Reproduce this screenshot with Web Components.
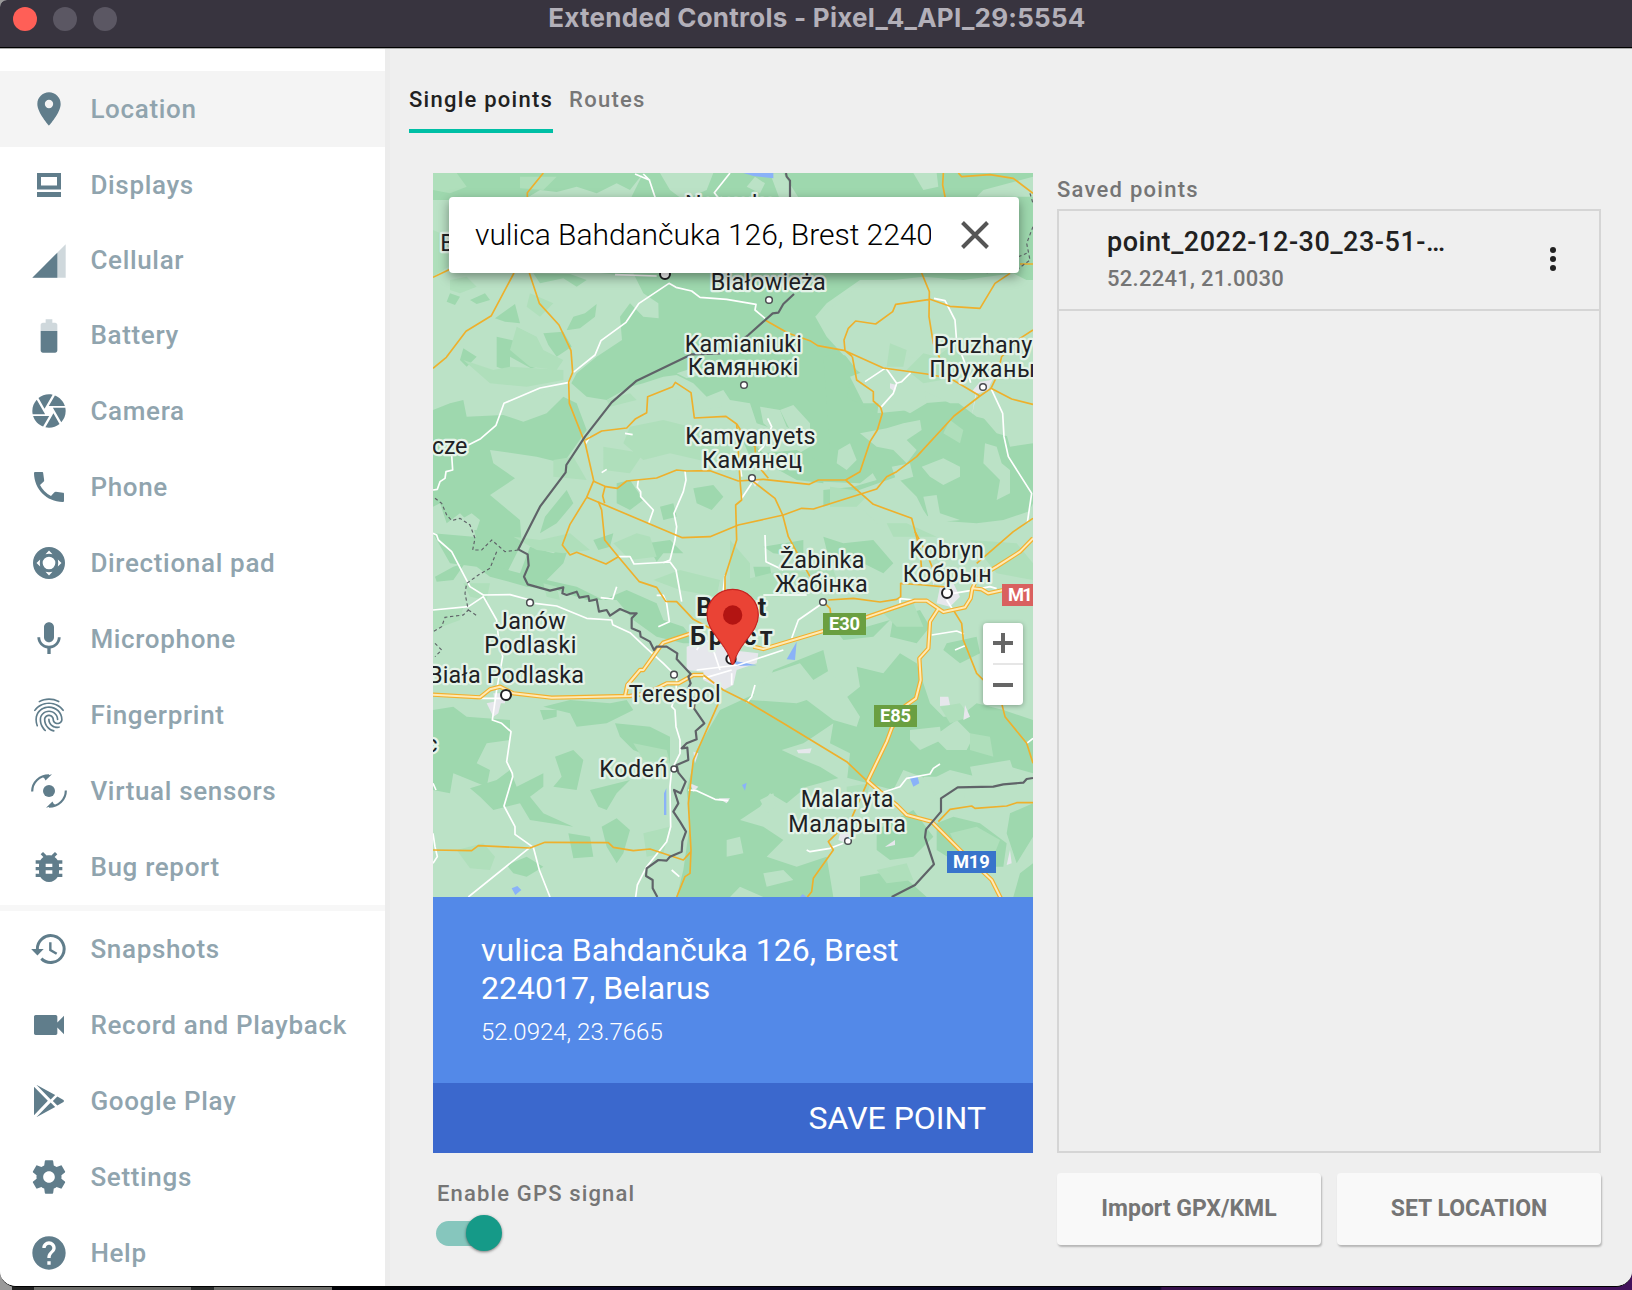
<!DOCTYPE html>
<html lang="en">
<head>
<meta charset="utf-8">
<title>Extended Controls</title>
<style>
html,body{margin:0;padding:0;width:1632px;height:1290px;overflow:hidden;background:#0a0816;font-family:Roboto,"Liberation Sans",sans-serif}
</style>
</head>
<body>
<ec-window>
  <ec-titlebar slot="title">Extended Controls - Pixel_4_API_29:5554</ec-titlebar>
  <ec-sidebar slot="side">
    <ec-nav-item icon="location" active>Location</ec-nav-item>
    <ec-nav-item icon="displays">Displays</ec-nav-item>
    <ec-nav-item icon="cellular" compact>Cellular</ec-nav-item>
    <ec-nav-item icon="battery" compact>Battery</ec-nav-item>
    <ec-nav-item icon="camera">Camera</ec-nav-item>
    <ec-nav-item icon="phone">Phone</ec-nav-item>
    <ec-nav-item icon="dpad">Directional pad</ec-nav-item>
    <ec-nav-item icon="mic">Microphone</ec-nav-item>
    <ec-nav-item icon="finger">Fingerprint</ec-nav-item>
    <ec-nav-item icon="sensors">Virtual sensors</ec-nav-item>
    <ec-nav-item icon="bug">Bug report</ec-nav-item>
    <ec-nav-item slot="lower" icon="history">Snapshots</ec-nav-item>
    <ec-nav-item slot="lower" icon="video">Record and Playback</ec-nav-item>
    <ec-nav-item slot="lower" icon="play">Google Play</ec-nav-item>
    <ec-nav-item slot="lower" icon="settings">Settings</ec-nav-item>
    <ec-nav-item slot="lower" icon="help">Help</ec-nav-item>
  </ec-sidebar>
  <ec-location-page></ec-location-page>
</ec-window>

<template id="map-art">
<svg viewBox="9 9 1800 2172" width="600" height="724" preserveAspectRatio="none">
<rect x="9" y="9" width="1800" height="2172" fill="#bbe2c6"/>
<!-- forests -->
<g fill="#9ed8ae">
<path d="M9 9H640L600 60 560 40 500 70 440 50 380 66 330 60 280 90H9V40L60 45 40 9zM9 80L80 70 130 40 200 55 240 90H9z"/>
<path d="M640 9H1809V330H1290L1190 400 1156 440 1200 480 1245 555 1280 600 1330 640 1345 700 1335 820 1340 900 1290 940 1180 935 1130 910 1090 860 1140 830 1140 760 1090 705 1050 720 1075 770 1110 830 1040 780 980 760 960 700 900 690 880 660 830 680 790 640 740 615 700 620 640 640 600 650 530 690 470 680 424 640 440 610 500 560 576 510 570 440 600 400 640 440 686 445 685 400 640 370 610 310 560 314 430 300V90H600z"/>
<path d="M920 770L1000 850 1100 840 1180 880 1180 940 1100 930 1010 880 960 860z"/>
<path d="M9 720L60 700 100 690 110 740 220 735 280 755 350 730 400 680 440 700 470 780 400 880 320 860 180 840 190 880 255 925 180 975 270 1050 275 1120 220 1230 160 1190 130 1070 90 1030 50 1060 30 1000 9 1010z"/>
<path d="M1180 560L1240 550 1270 600 1250 680 1340 730 1440 720 1480 700 1600 690 1640 720 1700 790 1809 820V1000L1780 1060 1700 1090 1560 1060 1510 1030 1470 1050 1380 990 1320 1020 1250 990 1180 1010 1180 960 1270 950 1340 930 1300 860 1200 840z"/>
<path d="M410 480L430 440 465 430 500 402 495 440 450 475 415 480zM195 445L255 402 270 460 225 455zM340 490L400 485 425 530 380 560 355 525zM200 500L285 520 330 560 320 590 250 610 200 590zM100 535L140 560 110 590 90 570zM120 390L165 370 180 390 140 402zM60 370L90 380 75 405 50 395zM310 310L420 312 470 330 440 350 400 325 330 340z"/>
<path d="M790 955L850 945 880 980 845 1020 800 1000zM345 1040L410 960 430 1000 380 1060 330 1090zM560 940L600 930 640 990 600 1020 560 1000zM690 1010L730 1000 740 1040 700 1050z"/>
<path d="M9 1090L130 1100 190 1120 200 1190 270 1210 300 1130 370 1150 420 1120 400 1180 350 1230 440 1250 520 1290 590 1260 680 1300 700 1350 760 1370 800 1420 760 1420 680 1400 610 1350 560 1290 470 1290 380 1260 290 1250 180 1220 140 1190 60 1180z"/>
<path d="M15 1220L70 1190 105 1180 70 1230 20 1235zM490 1110L550 1090 540 1130 505 1140zM650 1120L720 1110 760 1150 700 1150 680 1175z"/>
<path d="M9 1620L70 1610 110 1640 240 1650 240 1710 170 1720 140 1780 180 1800 170 1850 70 1810 60 1870 9 1860zM340 1610L420 1590 540 1600 590 1590 610 1620 530 1660 440 1670 420 1630zM330 1620L380 1620 380 1640 340 1650z"/>
<path d="M375 1760L430 1740 460 1770 440 1860 370 1850 395 1820zM555 1660L660 1670 720 1700 720 1780 660 1760 610 1740 570 1700zM120 1855L200 1830 240 1800 260 1850 340 1810 340 1850 300 1880 340 1930 430 1970 300 1950 270 1900 190 1920 150 1880zM480 1860L600 1830 560 1870 530 1920 505 1910zM415 1990L480 2000 490 2060 430 2065zM515 1970L560 1945 600 1980 580 2050 560 2080 530 2030zM230 2085L290 2060 340 2090 290 2120 250 2110z"/>
<path d="M870 1620L1000 1560 1030 1500 1180 1440 1200 1530 1140 1560 1240 1590 1290 1550 1280 1490 1360 1510 1410 1450 1460 1480 1500 1600 1540 1640 1590 1640 1640 1600 1720 1620 1809 1650V1810L1740 1790 1640 1820 1560 1800 1500 1830 1420 1800 1390 1860 1240 1820 1130 1850 1070 1900 1020 1870 990 1910 930 1950 1000 1970 1060 2010 1010 2060 1100 2090 1190 2060 1210 2181H1000L930 2150 900 2181H740L760 2100 780 1960 770 1860 800 1740z"/>
<path d="M1340 1980L1450 1920 1510 2000 1450 2060 1380 2070 1340 2040zM1520 1960L1570 1940 1650 1960 1730 2020 1720 2090 1600 2090 1520 2040zM1740 1930L1809 1900V2000L1760 2080 1730 1990zM1290 2120L1400 2100 1490 2181H1290zM1770 2110L1809 2080V2181H1750z"/>
<path d="M970 1190L1020 1190 1030 1250 980 1240zM1000 1130L1120 1110 1120 1160 1030 1150zM1180 1100L1240 1120 1330 1110 1390 1180 1360 1210 1280 1170 1200 1180zM1390 1340L1470 1320 1500 1370 1460 1420 1380 1400zM1550 1420L1640 1400 1650 1450 1590 1480 1540 1440zM1200 1360L1310 1370 1380 1350 1330 1400 1240 1410z"/>
</g>
<!-- clearings -->
<g fill="#bbe2c6">
<path d="M690 9H850L830 60 760 90 720 60zM950 50L975 20 1005 40 990 70zM1020 10H1060L1110 90H1050zM1450 9H1520L1525 50 1480 60zM1660 60L1809 20V80H1640z"/>
<path d="M1156 440L1220 400 1300 340 1480 320 1600 330 1750 310 1809 340V480L1700 520 1600 500 1520 580 1440 560 1370 590 1300 570 1240 555 1190 500z"/>
<path d="M1260 620L1340 590 1410 620 1480 640 1490 700 1440 730 1380 700 1300 700zM1560 680L1660 640 1809 640V820L1740 830 1720 760 1640 740zM1390 620L1500 610 1620 640 1660 700 1560 700z"/>
<path d="M1290 790L1370 775 1420 760 1470 750 1475 780 1430 810 1460 840 1430 880 1390 840 1340 830zM1225 840L1260 820 1280 870 1250 900 1220 880zM1385 890L1440 880 1450 920 1400 935zM1475 890L1540 865 1590 890 1590 920 1540 945 1500 920zM1665 820L1700 830 1715 880 1740 900 1740 970 1700 990 1710 930 1660 880z"/>
<path d="M1260 970L1400 920 1460 980 1480 1020 1500 1050 1640 1060 1720 1050 1809 1020V1110H1480L1420 1070 1340 1060 1300 1020 1240 1010zM1480 980L1520 975 1530 1030 1590 1050 1500 1060z"/>
<path d="M990 710L1050 720 1070 770 1120 800 1060 810 1000 760zM740 690L870 680 875 710 800 720 740 700zM740 610L800 590 830 610 770 625zM240 560L330 610 380 620 370 660 300 690 240 650zM90 1050L125 1030 150 1050 140 1080 100 1080z"/>
<path d="M960 1590L1020 1510 1110 1480 1150 1530 1200 1500 1290 1640 1280 1670 1210 1650 1130 1590 1100 1600zM1055 1740L1120 1720 1150 1700 1210 1660 1200 1720 1260 1750 1250 1840 1170 1790 1120 1770zM1440 1680L1530 1670 1535 1710 1470 1740 1440 1710zM1510 1700L1580 1650 1630 1700 1610 1740 1550 1740zM1620 1790L1740 1770 1750 1800 1700 1850 1630 1830zM1480 1820L1610 1820 1600 1900 1540 1910zM990 1890L1030 1870 1040 1910 1010 1930zM890 2010L930 2000 940 2050 890 2060zM1000 2110L1060 2100 1090 2130 1010 2150z"/>
</g>
<!-- scrubland -->
<g fill="#afdfbb">
<path d="M9 9H80L110 50 60 70 9 60zM270 20L380 20 340 60 270 55zM9 180L55 200V290L9 320zM60 330L110 320 140 350 90 370 60 360zM260 470L320 500 340 540 400 570 380 600 300 590 240 540zM300 370L370 400 330 440 290 410zM100 570L190 600 240 590 400 600 400 630 290 650 180 640zM600 770L700 750 780 770 900 800 900 850 850 880 720 850 640 870 580 820zM370 870L430 860 470 930 370 920zM520 830L640 850 600 910 520 900zM530 690L600 670 620 690 540 710z"/>
<path d="M9 1320L100 1310 90 1350 9 1380zM250 1100L330 1110 420 1090 480 1140 400 1150 320 1140zM550 1120L620 1090 660 1100 680 1160 600 1170zM670 1230L750 1200 870 1230 860 1280 750 1260zM100 1240L180 1240 170 1290 120 1280zM340 1240L380 1250 390 1290 350 1280zM80 2040L160 2020 195 2060 180 2100 120 2095zM640 1990L720 1970 700 2050 650 2060zM610 1720L710 1740 720 1780 640 1770z"/>
<path d="M1430 600L1480 550 1520 560 1560 530 1600 560 1590 620 1480 640zM1380 520L1430 540 1420 590 1370 590zM1200 950L1270 960 1310 980 1280 1010 1200 1010zM1370 1060L1430 1060 1520 1100H1390zM1560 750L1600 780 1590 820 1540 790zM900 1110L960 1180 960 1240 1000 1290 900 1280zM1130 1200L1210 1200 1230 1250 1150 1260zM1360 1330L1450 1300 1480 1370 1400 1370zM1620 1690L1680 1700 1690 1760 1620 1740zM1530 1610L1590 1600 1620 1640 1560 1660zM1250 1850L1320 1840 1310 1880 1250 1890zM1560 1990L1640 1970 1710 2010 1690 2060 1590 2050zM1340 2100L1430 2080 1450 2130 1370 2140zM940 1230L1060 1200 1180 1210 1160 1260 1040 1280 950 1270zM1620 1110L1760 1120 1809 1180V1230L1700 1210z"/>
</g>
<!-- built-up areas -->
<g fill="#e6e7ec">
<path d="M770 1430L830 1410 900 1440 985 1450 980 1480 920 1500 910 1545 880 1560 820 1530 820 1505 770 1500zM170 1600L215 1590 205 1630 190 1640zM190 1570H225V1600H195zM1626 735L1640 650 1690 625 1675 655 1640 670zM1625 665L1650 635 1685 630 1675 660 1645 670zM1530 1250L1570 1240 1590 1280 1560 1310 1520 1300zM1500 1200L1530 1220 1510 1245zM1530 1580L1555 1580 1560 1605 1530 1608zM1605 1605L1620 1640 1600 1650zM1100 1740L1145 1735 1140 1750 1105 1750zM1365 2030L1395 2010 1395 2025 1370 2030zM1230 1990L1260 1990 1250 2020 1225 2010zM1740 2040L1745 2080 1730 2085zM1380 640L1400 645 1395 665 1380 655zM960 925L990 930 975 950zM790 1745L805 1750 795 1780zM780 1840L805 1850 790 1865zM865 1885L900 1885 890 1900z"/>
</g>
<g fill="#8ab2f8">
<path d="M940 9H1030V25L970 18zM912 1472L980 1486 920 1488zM1070 1468L1100 1415 1095 1470zM245 2155L262 2148 274 2160 256 2175zM936 1845L950 1838 945 1862zM1438 1820L1462 1818 1468 1840 1450 1850zM702 1870L709 1855V1935H702zM1110 2181L1118 2172 1130 2181z"/>
</g>
<!-- minor roads -->
<g fill="none" stroke="#fff" stroke-width="5" stroke-linejoin="round">
<path d="M615 12L658 30 678 90M640 12L660 32M900 9L853 68 870 90"/>
<path d="M418 637L330 654 222 700 198 766 152 806 115 825M65 855L68 900 48 905 45 925 30 935 22 958 9 960M430 607L495 555 513 512 588 457 627 400 717 340 738 352 785 363 810 382 890 388 978 403 975 420 1005 445M480 800L466 822M585 790L608 794M515 908L530 898M555 314L680 318"/>
<path d="M625 930L622 952 632 965 632 980 670 1020 656 1060M765 903L768 930 760 965 732 1030 740 1070 735 1110 720 1170 700 1178M1013 745L1025 770 1000 830 985 845M925 850L935 920M965 940L935 985"/>
<path d="M1365 595L1305 635M1368 595L1400 640 1390 670 1352 713M1400 640L1415 635 1442 608M1512 385L1545 392 1575 450 1580 515 1605 580 1622 638M1683 655L1718 730 1722 800 1735 860 1805 970 1792 1058"/>
<path d="M9 1090L20 1095 25 1110 65 1145 120 1250 160 1275 240 1274 300 1290M9 1320L115 1310 160 1280 200 1350 205 1400 218 1460 200 1560 187 1650 215 1660 243 1685 230 1775 247 1810 248 1820 222 1908 255 1970 255 1993 310 2032 328 2100 360 2181M300 2032L115 2181M145 1585H215"/>
<path d="M315 1300L380 1308 470 1345 545 1350 548 1364 600 1388 650 1435 700 1480 720 1500 740 1520 738 1570 725 1610 735 1620 738 1670 750 1710 750 1750 725 1800 720 1850 722 1970 710 2015 650 2090 622 2145 617 2181"/>
<path d="M565 1160L600 1160 612 1182 720 1176 738 1200 755 1295M512 1283L548 1287 560 1250M680 1276H700L710 1300 718 1355 685 1370M9 1840L18 1860M9 1990L15 2030 22 2060 9 2080"/>
<path d="M885 1215L880 1260 905 1300M800 1440L820 1410 900 1430M800 1500L925 1485 1060 1440M870 1500L850 1440M905 1510L905 1545M820 1525L905 1500M1005 1095L1008 1175 1060 1200M1170 1305L1105 1350 1085 1405M1130 1275H1000M975 1545L965 1580 950 1598"/>
<path d="M775 1860L800 1862 855 1888 895 1892M725 2100L748 2120M1130 2040L1140 2045 1200 2035 1240 2020M1350 1870L1380 1860 1410 1850 1430 1825 1500 1812 1510 1795 1530 1782M1505 1395L1580 1383 1602 1392M1575 1440L1605 1427M1455 1290L1410 1286 1410 1300M1570 1270L1620 1262 1680 1250 1700 1256M1550 1290L1566 1315M1790 1720L1809 1705"/>
</g>
<!-- secondary roads -->
<g fill="none" stroke="#eeb02c" stroke-width="5" stroke-linejoin="round">
<path d="M340 9L292 68V90M9 322L60 298M252 309L184 437 108 484 49 562 9 595M298 309L328 400 387 465 423 542 428 607 416 636 418 700 466 822 491 932 470 982 420 1063 397 1125 420 1155 440 1147 528 1182 565 1160"/>
<path d="M466 810L515 783 590 774 617 746 650 728 653 680 728 650 736 637 783 668 793 744 888 739 920 762 945 800M491 934L528 950 562 955 590 933 680 924 740 900 770 903 840 902 925 933 1000 928 1138 943 1165 930 1247 930 1290 905 1320 815 1342 780 1357 730 1352 712 1330 693V665L1280 630 1267 560"/>
<path d="M525 950L518 978 524 1000M470 982L757 1103 840 1100 925 1065 1060 1035 1115 1015 1150 1017 1340 957 1370 920 1400 905 1460 860 1572 738 1650 678 1683 655 1745 687 1809 703"/>
<path d="M505 995L515 1020 524 1110 565 1160 628 1235 680 1252 707 1294 740 1295 790 1348 840 1375M920 762L930 930 935 990 917 1005 920 1110 885 1220 885 1275M945 800L975 830 978 880 1015 925M970 935L1035 985 1058 1035 1075 1100 1140 1220 1150 1250"/>
<path d="M1005 450L1075 490 1140 512 1163 527 1245 542 1360 594 1490 612 1560 625 1650 678M1267 560L1245 542 1242 510 1255 475 1277 453 1337 462 1388 425 1397 403 1500 388 1560 409 1650 415 1695 340 1740 310M1540 9L1538 45 1547 90M1475 309L1498 365 1497 440 1510 520 1540 590 1545 618M1585 9L1595 20 1680 14 1750 25 1809 70M1770 282H1809M1809 480L1770 505 1715 560 1700 620 1683 655M1247 930L1330 1003 1445 1045 1470 1140 1475 1200M1809 1045L1750 1085 1640 1180"/>
<path d="M820 1515L880 1560 960 1600 1060 1660 1250 1775 1313 1835M865 1600L790 1770 775 1900 783 2040 780 2110 765 2120 740 2181M9 2040L125 2042 145 2027 300 2034 345 2017 535 2018 550 2032 610 2042 660 2037 760 2070 783 2045"/>
<path d="M1195 1290L1270 1285 1350 1296 1400 1288 1412 1280 1412 1240 1480 1245 1560 1252M1185 1300L1200 1315 1202 1330M1455 1085L1490 1150 1510 1200M1570 1320L1595 1360 1600 1410 1640 1510 1660 1530M1715 1600L1725 1640 1790 1720 1809 1780M1313 1835L1260 1955 1225 1985 1195 2015 1210 2040 1150 2125 1145 2165 1132 2181M1525 1955L1560 1918 1625 1908 1635 1915 1730 1908 1760 1898H1809"/>
</g>
<!-- highways -->
<g fill="none" stroke-linejoin="round">
<path stroke="#f3b02e" stroke-width="13" d="M9 1574L150 1582 180 1558 210 1550 250 1570 365 1583 600 1578 650 1570 710 1540 745 1540 790 1515 820 1515M585 1578L592 1545 630 1500 640 1500 690 1430 700 1418 790 1388M970 1430L1000 1437 1180 1383 1308 1342 1455 1292 1490 1292 1540 1326 1605 1312 1622 1285 1627 1255 1655 1258 1675 1270 1720 1260M1627 1257L1640 1225 1700 1190 1770 1145 1809 1105M1525 1316L1500 1355 1495 1435 1468 1465 1472 1530 1458 1585 1420 1612 1385 1675 1370 1715 1313 1833 1350 1865 1400 1905 1430 1935 1505 1955 1595 2045 1685 2130 1712 2184"/>
<path stroke="#feeab5" stroke-width="6" d="M9 1574L150 1582 180 1558 210 1550 250 1570 365 1583 600 1578 650 1570 710 1540 745 1540 790 1515 820 1515M585 1578L592 1545 630 1500 640 1500 690 1430 700 1418 790 1388M970 1430L1000 1437 1180 1383 1308 1342 1455 1292 1490 1292 1540 1326 1605 1312 1622 1285 1627 1255 1655 1258 1675 1270 1720 1260M1627 1257L1640 1225 1700 1190 1770 1145 1809 1105M1525 1316L1500 1355 1495 1435 1468 1465 1472 1530 1458 1585 1420 1612 1385 1675 1370 1715 1313 1833 1350 1865 1400 1905 1430 1935 1505 1955 1595 2045 1685 2130 1712 2184"/>
</g>
<!-- borders -->
<g fill="none" stroke="#5f6368" stroke-width="6.5" stroke-linejoin="round">
<path d="M1068 9L1070 20 1080 32V90M1092 372L1060 402 1045 428 1028 430 955 495 895 540 870 550 785 553 620 632 545 697 465 800 409 885 407 907 330 1010 265 1138 293 1153 296 1187 282 1220 293 1243 360 1262 400 1252 397 1270 410 1275 440 1265 448 1283 475 1278 478 1293 500 1288 507 1325 530 1320 540 1337 570 1317 600 1330 620 1330 605 1345 605 1375 630 1385 632 1400 660 1415 672 1440 680 1430 710 1430 742 1450 740 1467 782 1512 775 1520 782 1540 772 1560 795 1590 792 1615 823 1660 797 1683 800 1708 770 1720 755 1735 772 1733 775 1770 740 1785 745 1808 767 1835 752 1870 732 1860 745 1900 730 1925 750 1955 768 1985 757 2015 755 2045 720 2060 710 2072 685 2070 650 2095 648 2118 668 2130 668 2155 682 2181"/>
<path d="M1385 2181L1455 2145 1512 2083 1485 2002 1488 1978 1533 1925 1533 1885 1583 1852 1690 1850 1720 1843 1780 1838 1790 1827 1809 1824"/>
</g>
<g fill="none" stroke="#5f6368" stroke-width="3.5" stroke-dasharray="10 8">
<path d="M15 985L35 1000 50 1035 65 1052 90 1045 120 1065 135 1105 128 1140 155 1140 185 1110 225 1145 265 1140M200 1145L180 1195 145 1215 110 1240 105 1270 115 1320 100 1335 45 1342 35 1370 9 1385M115 1320L145 1340M15 1420L35 1440 15 1460M1800 70L1809 100M1809 170L1790 220 1800 270 1760 300M1765 260L1790 250M1670 308L1720 300"/>
</g>
<g fill="#fff" stroke="#494b4f" stroke-width="4.5">
<circle cx="1017" cy="390" r="10"/><circle cx="942" cy="645" r="10"/><circle cx="966" cy="924" r="10"/><circle cx="1659" cy="651" r="10"/><circle cx="1179" cy="1296" r="10"/><circle cx="300" cy="1298" r="10"/><circle cx="732" cy="1514" r="10"/><circle cx="732" cy="1797" r="9"/><circle cx="1254" cy="2013" r="10"/>
<g stroke="#202124" stroke-width="6"><circle cx="1551" cy="1269" r="15"/><circle cx="228" cy="1575" r="15"/><circle cx="705" cy="312" r="15"/><circle cx="903" cy="1467" r="14"/></g>
</g>
<!-- place names -->
<g font-family="Roboto,'Noto Sans',sans-serif" font-size="70" fill="#202124" stroke="#e4f3e8" stroke-width="14" stroke-linejoin="round" paint-order="stroke">
<text x="765" y="125" textLength="275">Narewka</text>
<text x="31" y="242">B</text>
<text x="842" y="360" textLength="345">Białowieża</text>
<text x="764" y="545" textLength="352">Kamianiuki</text><text x="773" y="615" textLength="332">Камянюкі</text>
<text x="1511" y="550" textLength="296">Pruzhany</text><text x="1498" y="622" textLength="317">Пружаны</text>
<text x="6" y="853" textLength="106">cze</text>
<text x="766" y="823" textLength="391">Kamyanyets</text><text x="816" y="893" textLength="300">Камянец</text>
<text x="1050" y="1195" textLength="253">Žabinka</text><text x="1035" y="1267" textLength="278">Жабінка</text>
<text x="1438" y="1163" textLength="224">Kobryn</text><text x="1418" y="1235" textLength="267">Кобрын</text>
<text x="195" y="1378" textLength="212">Janów</text><text x="163" y="1450" textLength="276">Podlaski</text>
<text x="-6" y="1540" textLength="468">Biała Podlaska</text>
<text x="596" y="1595" textLength="276">Terespol</text>
<text x="508" y="1822" textLength="204">Kodeń</text>
<text x="1112" y="1912" textLength="278">Malaryta</text><text x="1075" y="1985" textLength="353">Маларыта</text>
<text x="-14" y="1745">c</text>
<g font-weight="700" font-size="76"><text x="799" y="1338" textLength="210">Brest</text><text x="780" y="1425" textLength="248">Брест</text></g>
</g>
<g font-family="Roboto,sans-serif" font-size="55" font-weight="700" fill="#fff">
<rect x="1179" y="1329" width="129" height="66" fill="#6a9f41"/><text x="1197" y="1381" textLength="93">E30</text>
<rect x="1332" y="1605" width="129" height="66" fill="#6a9f41"/><text x="1350" y="1656" textLength="93">E85</text>
<rect x="1716" y="1242" width="120" height="66" fill="#d9605f"/><text x="1734" y="1294" textLength="74">M1</text>
<rect x="1551" y="2043" width="147" height="66" fill="#3874cb"/><text x="1569" y="2095" textLength="110">M19</text>
</g>
<path d="M908 1258c-43 0-77 34-77 77 0 32 20 54 38 78 17 22 30 43 34 63 1 7 4 7 5 7s4 0 5-7c4-20 17-41 34-63 18-24 38-46 38-78 0-43-34-77-77-77z" fill="#ea4335" stroke="#c5221f" stroke-width="3.5"/>
<circle cx="908" cy="1335" r="29" fill="#b31412"/>
</svg>
</template>

<script>
const D={
location:'<path d="M12 2C8.13 2 5 5.13 5 9c0 5.25 7 13 7 13s7-7.75 7-13c0-3.87-3.13-7-7-7zm0 9.5a2.5 2.5 0 1 1 0-5 2.5 2.5 0 0 1 0 5z"/>',
displays:'<path fill-rule="evenodd" d="M4.8 4.8H19.2V14.7H4.8zM7.2 7.2V12.3H16.8V7.2zM4.8 16.2H19.2V19.2H4.8z"/>',
cellular:'<path opacity=".3" d="M2 22h20V2z"/><path d="M17 7L2 22h15z"/>',
battery:'<path opacity=".3" d="M17 5.33C17 4.6 16.4 4 15.67 4H14V2h-4v2H8.33C7.6 4 7 4.6 7 5.33V9h10z"/><path d="M7 9v11.67C7 21.4 7.6 22 8.33 22h7.33c.74 0 1.34-.6 1.34-1.33V9z"/>',
camera:'<path d="M9.4 10.5l4.77-8.26C13.47 2.09 12.75 2 12 2c-2.4 0-4.6.85-6.32 2.25l3.66 6.35.06-.1zM21.54 9c-.92-2.92-3.15-5.26-6-6.34L11.88 9h9.66zm.26 1h-7.49l.29.5 4.76 8.25C21 16.97 22 14.61 22 12c0-.69-.07-1.35-.2-2zM8.54 12l-3.9-6.75C3.01 7.03 2 9.39 2 12c0 .69.07 1.35.2 2h7.49l-1.15-2zm-6.08 3c.92 2.92 3.15 5.26 6 6.34L12.12 15H2.46zm11.27 0l-3.9 6.76c.7.15 1.42.24 2.17.24 2.4 0 4.6-.85 6.32-2.25l-3.66-6.35-.93 1.6z"/>',
phone:'<path d="M20.4 15.4l-4.3-.5c-.4 0-.7.1-1 .4l-1.9 2.1a15 15 0 0 1-6.6-6.6l2.1-1.9c.3-.3.4-.6.4-1l-.6-4.3c0-.4-.3-.6-.7-.6H3.8c-.5 0-.8.3-.8.8C3.2 13.500 10.500 20.800 20.200 21c.5 0 .8-.3.8-.8v-4.100c0-.4-.2-.7-.6-.7z"/>',
dpad:'<path fill-rule="evenodd" d="M12 2.400a9.600 9.600 0 1 0 0 19.200 9.600 9.600 0 0 0 0-19.200zM12 8.200a3.800 3.800 0 1 1 0 7.600 3.800 3.800 0 0 1 0-7.600zM12 4.500L14.100 6.700Q12 6.200 9.900 6.700zM12 19.500L9.900 17.300Q12 17.800 14.100 17.300zM4.500 12L6.700 9.900Q6.200 12 6.700 14.100zM19.500 12L17.300 14.100Q17.800 12 17.300 9.900z"/>',
mic:'<path d="M12 14c1.660 0 3-1.340 3-3V5c0-1.660-1.340-3-3-3S9 3.340 9 5v6c0 1.660 1.340 3 3 3zm5.300-3c0 3-2.540 5.100-5.300 5.100S6.700 14 6.700 11H5c0 3.410 2.720 6.230 6 6.720V21h2v-3.280c3.280-.48 6-3.300 6-6.720h-1.700z"/>',
finger:'<path d="M17.81 4.47c-.08 0-.16-.02-.23-.06C15.66 3.42 14 3 12.01 3c-1.98 0-3.86.47-5.57 1.41-.24.13-.54.04-.68-.2-.13-.24-.04-.55.2-.68C7.820 2.520 9.860 2 12.010 2c2.130 0 3.990.47 6.030 1.520.25.13.34.43.21.67-.09.18-.26.28-.44.28zM3.500 9.720c-.1 0-.2-.03-.29-.09-.23-.16-.28-.47-.12-.7.99-1.400 2.250-2.500 3.750-3.270C9.980 4.040 14 4.030 17.150 5.650c1.500.77 2.760 1.860 3.750 3.250.16.22.11.54-.12.7-.23.16-.54.11-.7-.12-.9-1.260-2.040-2.250-3.390-2.940-2.870-1.470-6.540-1.470-9.400.01-1.360.7-2.500 1.700-3.400 2.960-.08.14-.23.21-.39.21zm6.250 12.070c-.13 0-.26-.05-.35-.15-.87-.87-1.340-1.430-2.010-2.640-.69-1.230-1.050-2.730-1.050-4.340 0-2.970 2.540-5.390 5.660-5.390s5.660 2.420 5.660 5.390c0 .28-.22.5-.5.5s-.5-.22-.5-.5c0-2.420-2.090-4.390-4.660-4.390-2.570 0-4.660 1.970-4.660 4.390 0 1.440.32 2.770.93 3.850.64 1.150 1.080 1.640 1.850 2.420.19.2.19.51 0 .71-.11.1-.24.15-.37.15zm7.170-1.850c-1.190 0-2.240-.3-3.100-.89-1.490-1.010-2.380-2.650-2.380-4.390 0-.28.22-.5.5-.5s.5.22.5.5c0 1.410.72 2.740 1.940 3.560.71.48 1.540.71 2.540.71.24 0 .64-.03 1.040-.1.27-.05.53.13.58.41.05.27-.13.53-.41.58-.57.11-1.070.12-1.210.12zM14.910 22c-.04 0-.09-.01-.13-.02-1.590-.44-2.630-1.030-3.720-2.100-1.400-1.390-2.170-3.240-2.170-5.220 0-1.620 1.380-2.940 3.080-2.940 1.700 0 3.080 1.320 3.080 2.940 0 1.070.93 1.940 2.080 1.940s2.080-.87 2.080-1.940c0-3.770-3.250-6.830-7.250-6.830-2.840 0-5.440 1.580-6.610 4.030-.39.81-.59 1.760-.59 2.800 0 .78.07 2.010.67 3.610.1.26-.03.55-.29.64-.26.1-.55-.04-.64-.29-.49-1.310-.73-2.610-.73-3.960 0-1.200.23-2.290.68-3.240 1.330-2.790 4.280-4.600 7.510-4.600 4.550 0 8.250 3.510 8.250 7.830 0 1.620-1.380 2.940-3.080 2.940s-3.080-1.320-3.080-2.940c0-1.070-.93-1.940-2.080-1.940s-2.080.87-2.080 1.940c0 1.710.66 3.310 1.870 4.510.95.94 1.860 1.460 3.270 1.850.27.07.42.35.35.61-.05.23-.26.38-.47.38z"/>',
sensors:'<circle cx="12" cy="12" r="3.6"/><path d="M1.900 12.300C1.900 6.800 6.300 2.600 12 2.550" fill="none" stroke="#607d8b" stroke-width="1.3"/><path d="M13.800 2L8.100 3.400 9.300 4.500 9.900 5.700z"/><g transform="rotate(180 12 12)"><path d="M1.900 12.300C1.900 6.800 6.300 2.600 12 2.550" fill="none" stroke="#607d8b" stroke-width="1.3"/><path d="M13.800 2L8.100 3.400 9.300 4.500 9.900 5.700z"/></g>',
bug:'<path d="M20 8h-2.810c-.45-.78-1.070-1.450-1.820-1.960L17 4.410 15.590 3l-2.170 2.170C12.960 5.060 12.490 5 12 5c-.49 0-.96.06-1.410.17L8.410 3 7 4.410l1.620 1.630C7.880 6.550 7.260 7.220 6.810 8H4v2h2.090c-.05.33-.09.66-.09 1v1H4v2h2v1c0 .34.04.67.09 1H4v2h2.810c1.040 1.790 2.970 3 5.190 3s4.150-1.210 5.190-3H20v-2h-2.090c.05-.33.09-.66.09-1v-1h2v-2h-2v-1c0-.34-.04-.67-.09-1H20V8zm-6 8h-4v-2h4v2zm0-4h-4v-2h4v2z"/>',
history:'<path d="M5 12.500A8.050 8.050 0 1 1 7.400 17.750" fill="none" stroke="#607d8b" stroke-width="1.800"/><path d="M1.300 12H8.800L5.050 15.900z"/><path d="M12.800 7.900V12.600L16.600 14.900" fill="none" stroke="#607d8b" stroke-width="1.450"/>',
video:'<path d="M17 10.500V7c0-.55-.45-1-1-1H4c-.55 0-1 .45-1 1v10c0 .55.45 1 1 1h12c.55 0 1-.45 1-1v-3.500l4 4v-11l-4 4z"/>',
play:'<path d="M3 3.400L11.300 11.900 3 20.500zM4.400 2.200L15.700 8.400 13 11.100zM4.400 21.800L15.700 15.600 13 12.900zM17 9.300L20.700 11.400Q21.300 12 20.700 12.600L17 14.700 14.300 12z"/>',
settings:'<path d="M19.430 12.980c.04-.32.07-.64.07-.98s-.03-.66-.07-.98l2.110-1.650c.19-.15.24-.42.12-.64l-2-3.460c-.12-.22-.39-.3-.61-.22l-2.490 1c-.52-.4-1.080-.73-1.690-.98l-.38-2.650C14.460 2.180 14.250 2 14 2h-4c-.25 0-.46.18-.49.42l-.38 2.650c-.61.25-1.170.59-1.690.98l-2.490-1c-.23-.09-.49 0-.61.22l-2 3.460c-.13.22-.07.49.12.64l2.110 1.650c-.04.32-.07.65-.07.98s.03.66.07.98l-2.110 1.650c-.19.15-.24.42-.12.64l2 3.460c.12.22.39.3.61.22l2.490-1c.52.4 1.080.73 1.690.98l.38 2.650c.03.24.24.42.49.42h4c.25 0 .46-.18.49-.42l.38-2.650c.61-.25 1.170-.59 1.690-.98l2.490 1c.23.09.49 0 .61-.22l2-3.460c.12-.22.07-.49-.12-.64l-2.110-1.650zM12 15.500c-1.930 0-3.500-1.570-3.500-3.500s1.570-3.500 3.500-3.500 3.500 1.570 3.500 3.500-1.570 3.500-3.500 3.500z"/>',
help:'<path d="M12 2C6.480 2 2 6.480 2 12s4.480 10 10 10 10-4.480 10-10S17.520 2 12 2zm1 17h-2v-2h2v2zm2.070-7.750l-.9.92C13.450 12.900 13 13.500 13 15h-2v-.5c0-1.100.45-2.100 1.170-2.830l1.240-1.260c.37-.36.59-.86.59-1.410 0-1.100-.9-2-2-2s-2 .9-2 2H8c0-2.210 1.790-4 4-4s4 1.790 4 4c0 .88-.36 1.680-.93 2.250z"/>'
};
function define(name, render, after){
  customElements.define(name, class extends HTMLElement{
    connectedCallback(){
      if(this.shadowRoot) return;
      this.attachShadow({mode:'open'}).innerHTML=render(this);
      if(after) after(this);
    }
  });
}
define('ec-window',()=>`<style>
:host{display:flex;flex-direction:column;width:1632px;height:1290px;box-sizing:border-box;padding-bottom:3px;
background:linear-gradient(90deg,#999 12px,#222 12px 34px,#6c6c69 34px 191px,#2b2d2c 191px 214px,#6c6c69 214px 332px,#020308 332px 386px,#0b0826 600px 1160px,#35104a 1162px,#43125c)}
.win{height:1287px;box-sizing:border-box;display:flex;flex-direction:column;border-radius:7px 0 16px 16px;overflow:hidden;background:#efefef;border-bottom:1px solid #000}
.body{display:flex;flex:1;min-height:0}
</style><div class="win"><slot name="title"></slot><div class="body"><slot name="side"></slot><slot></slot></div></div>`);
define('ec-titlebar',()=>`<style>
:host{display:flex;height:47px;box-sizing:content-box;background:#38343f;border-bottom:1px solid #000;box-shadow:0 1px #aaa;position:relative;z-index:1;flex:none}
.dots{display:flex;gap:16px;padding:7px 0 0 13px;width:104px}
i{width:24px;height:24px;border-radius:50%;background:#5b5763}
i:first-child{background:#ff5f57}
.t{flex:1;text-align:center;padding-right:115px;font:700 26px/36px Inter,sans-serif;color:#b3b0b9;letter-spacing:.25px;white-space:nowrap}
</style><div class="dots"><i></i><i></i><i></i></div><div class="t"><slot></slot></div>`);
define('ec-sidebar',()=>`<style>
:host{display:flex;flex-direction:column;width:385px;flex:none;background:#fff;box-sizing:border-box;padding-top:23px}
hr{border:0;margin:0;height:6px;flex:none;background:#f7f7f7}
</style><slot></slot><hr><div class="lower"><slot name="lower"></slot></div>`);
define('ec-icon',h=>`<style>:host{display:block;width:40px;height:40px;fill:#607d8b}svg{display:block}</style><svg width="40" height="40" viewBox="0 0 24 24">${D[h.getAttribute('name')]}</svg>`);
define('ec-nav-item',h=>`<style>
:host{display:flex;align-items:center;gap:21.4px;height:76px;flex:none;padding-left:29px;box-sizing:border-box;font:500 26px/30px Roboto,sans-serif;letter-spacing:.67px;color:#90a4ae;white-space:nowrap}
:host([compact]){height:75px}
:host([active]){background:#f4f4f4}
span{padding-bottom:1px}
</style><ec-icon name="${h.getAttribute('icon')}"></ec-icon><span><slot></slot></span>`);
define('ec-tab',()=>`<style>
:host{display:block;font:500 22px/26px Roboto,sans-serif;letter-spacing:1.25px;color:#777;padding-bottom:16px;border-bottom:4px solid transparent;white-space:nowrap}
:host([active]){color:#212121;border-color:#00bfa5}
</style><slot></slot>`);
define('ec-search',()=>`<style>
:host{display:flex;align-items:center;width:570px;height:76px;box-sizing:border-box;padding:0 26px;background:#fff;border-radius:4px;box-shadow:0 4px 12px rgba(0,0,0,.4);justify-content:space-between}
span{width:456px;overflow:hidden;white-space:nowrap;font:300 30px/40px Roboto,sans-serif;letter-spacing:-.03px;color:#000}
svg{margin-right:4px}
</style><span><slot></slot></span><svg width="28" height="28" viewBox="0 0 28 28" stroke="#555" stroke-width="4"><path d="M1.500 1.500L26.500 26.500M26.500 1.500L1.500 26.500"/></svg>`);
define('ec-zoom',()=>`<style>
:host{display:flex;flex-direction:column;width:40px;height:82px;background:#fff;border-radius:4px;box-shadow:0 1px 5px rgba(0,0,0,.3)}
svg{display:block}
</style><svg width="40" height="82"><path d="M10 20H30M20 10V30M10 62H30" stroke="#666" stroke-width="4"/><path d="M10 41H40" stroke="#e6e6e6" stroke-width="2"/></svg>`);
define('ec-map',()=>`<style>
:host{display:block;width:600px;height:724px;position:relative;overflow:hidden}
svg{display:block}
ec-search{position:absolute;left:16px;top:24px}
ec-zoom{position:absolute;left:550px;top:450px}
</style><ec-search><slot></slot></ec-search><ec-zoom></ec-zoom>`,h=>h.shadowRoot.append(document.getElementById('map-art').content.cloneNode(true)));
define('ec-address',()=>`<style>
:host{display:flex;flex-direction:column;width:600px;height:256px;color:#fff;background:#5389e8}
.a{height:186px;box-sizing:border-box;padding:34px 48px 0;font:400 32px/38px Roboto,sans-serif;white-space:nowrap}
.c{display:block;font:300 24px/30px Roboto,sans-serif;margin-top:10px}
.s{flex:1;background:#3b68cd;display:flex;align-items:center;justify-content:flex-end;padding-right:47px;font:400 32px/36px Roboto,sans-serif}
</style><div class="a"><slot></slot><span class="c"><slot name="coords"></slot></span></div><div class="s"><slot name="action"></slot></div>`);
define('ec-toggle',()=>`<style>
:host{display:flex;align-items:center;width:66px;height:36px}
.k{width:64px;height:25px;border-radius:13px;background:#86c6bd;display:flex;align-items:center;justify-content:flex-end}
i{width:36px;height:36px;flex:none;border-radius:50%;background:#159a88;box-shadow:0 1px 3px rgba(0,0,0,.5);margin-right:-2px}
</style><div class="k"><i></i></div>`);
define('ec-button',()=>`<style>
:host{display:flex;align-items:center;justify-content:center;width:264px;height:72px;background:#f9f9f9;border-radius:4px;box-shadow:1px 2px 2px rgba(0,0,0,.24);font:700 23px/26px Roboto,sans-serif;color:#757575;white-space:nowrap}
</style><slot></slot>`);
define('ec-saved',()=>`<style>
:host{display:block;width:544px;height:944px;box-sizing:border-box;border:2px solid #d5d5d5}
.r{display:flex;justify-content:space-between;height:100px;box-sizing:border-box;border-bottom:2px solid #d5d5d5;padding:14px 43px 0 48px;white-space:nowrap}
.n{font:500 27px/34px Roboto,sans-serif;letter-spacing:.55px;color:#212121}
.p{font:500 22px/28px Roboto,sans-serif;letter-spacing:.28px;color:#757575;margin-top:6px}
.d{display:flex;flex-direction:column;gap:3px;padding-top:22px}
.d i{width:6px;height:6px;border-radius:50%;background:#212121}
</style><div class="r"><div><div class="n"><slot></slot></div><div class="p"><slot name="pos"></slot></div></div><div class="d"><i></i><i></i><i></i></div></div>`);
define('ec-location-page',()=>`<style>
:host{display:flex;flex-direction:column;flex:1;box-sizing:border-box;padding:39px 0 0 24px;background:#efefef;box-shadow:inset 5px 0 #ececec}
nav{display:flex;gap:16px;height:46px}
.cols{display:flex;gap:24px;padding:40px 0 0 24px}
.l{display:flex;flex-direction:column}
.lab{font:500 22px/26px Roboto,sans-serif;letter-spacing:1.25px;color:#757575;white-space:nowrap}
.gps{padding:28px 0 8px 4px;letter-spacing:1.15px}
ec-toggle{margin-left:3px}
.r{display:flex;flex-direction:column;padding-top:4px}
ec-saved{margin-top:6px}
.b{display:flex;gap:16px;margin-top:20px}
</style><nav><ec-tab active>Single points</ec-tab><ec-tab>Routes</ec-tab></nav>
<div class="cols"><div class="l"><ec-map>vulica Bahdančuka 126, Brest 224017</ec-map>
<ec-address>vulica Bahdančuka 126, Brest<br>224017, Belarus<span slot="coords">52.0924, 23.7665</span><span slot="action">SAVE POINT</span></ec-address>
<div class="lab gps">Enable GPS signal</div><ec-toggle></ec-toggle></div>
<div class="r"><div class="lab">Saved points</div><ec-saved>point_2022-12-30_23-51-…<span slot="pos">52.2241, 21.0030</span></ec-saved>
<div class="b"><ec-button>Import GPX/KML</ec-button><ec-button>SET LOCATION</ec-button></div></div></div>`);
</script>
</body>
</html>
